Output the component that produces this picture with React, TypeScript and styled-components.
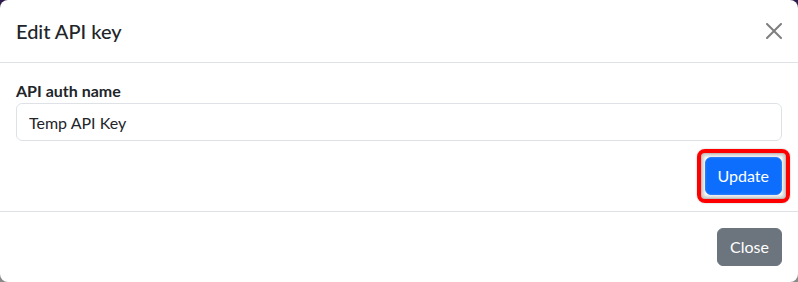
import React from 'react';
import styled, { createGlobalStyle } from 'styled-components';

const GlobalStyle = createGlobalStyle`
  html, body {
    margin: 0;
    padding: 0;
  }
  body {
    width: 798px;
    height: 282px;
    overflow: hidden;
    background: linear-gradient(180deg, #2d1b4e 0%, #5a5a66 60%, #8a8a8a 100%);
    font-family: Lato, "Liberation Sans", sans-serif;
    color: #212529;
  }
`;

// 모달 본체
const ModalContent = styled.div`
  width: 798px;
  height: 282px;
  background: #fff;
  border-radius: 8px;
  overflow: hidden;
  display: flex;
  flex-direction: column;
  box-sizing: border-box;
`;

const ModalHeader = styled.div`
  display: flex;
  align-items: center;
  justify-content: space-between;
  padding: 16px;
  border-bottom: 1px solid #dee2e6;
`;

const ModalTitle = styled.h5`
  margin: 0;
  font-size: 20px;
  font-weight: 500;
  line-height: 1.5;
`;

const CloseX = styled.button`
  width: 16px;
  height: 16px;
  padding: 0;
  border: 0;
  background: transparent;
  opacity: 0.5;
  display: flex;
  cursor: pointer;
`;

const ModalBody = styled.div`
  padding: 16px;
  display: flex;
  flex-direction: column;
`;

const Label = styled.label`
  font-size: 16px;
  font-weight: 700;
  line-height: 24px;
`;

const Input = styled.input`
  height: 38px;
  box-sizing: border-box;
  padding: 6px 12px;
  font-family: inherit;
  font-size: 16px;
  color: #212529;
  border: 1px solid #dee2e6;
  border-radius: 6px;
  outline: none;
`;

const ActionRow = styled.div`
  display: flex;
  justify-content: flex-end;
  margin-top: 16px;
`;

const Highlight = styled.span`
  position: relative;
  display: inline-flex;

  &::after {
    content: '';
    position: absolute;
    inset: -8px;
    border: 4px solid #ff0000;
    border-radius: 8px;
    box-shadow: inset 0 0 0 1px #bdbdbd, inset 0 0 3px 3px #cfcfcf, 0 0 2px rgba(0, 0, 0, 0.25);
    pointer-events: none;
  }
`;

const Button = styled.button<{ $variant: 'primary' | 'secondary' }>`
  height: 38px;
  box-sizing: border-box;
  padding: 6px 12px;
  font-family: inherit;
  font-size: 16px;
  line-height: 24px;
  color: #fff;
  border: 1px solid ${(p) => (p.$variant === 'primary' ? '#0d6efd' : '#6c757d')};
  background: ${(p) => (p.$variant === 'primary' ? '#0d6efd' : '#6c757d')};
  border-radius: 6px;
  cursor: pointer;
`;

const ModalFooter = styled.div`
  display: flex;
  justify-content: flex-end;
  padding: 12px;
  border-top: 1px solid #dee2e6;
`;

const FooterButton = styled(Button)`
  margin: 4px;
`;

const App: React.FC = () => (
  <>
    <GlobalStyle />
    <ModalContent>
      <ModalHeader>
        <ModalTitle>Edit API key</ModalTitle>
        <CloseX aria-label="Close">
          <svg width="16" height="16" viewBox="0 0 16 16">
            <path
              fill="#000"
              d="M.293.293a1 1 0 0 1 1.414 0L8 6.586 14.293.293a1 1 0 1 1 1.414 1.414L9.414 8l6.293 6.293a1 1 0 0 1-1.414 1.414L8 9.414l-6.293 6.293a1 1 0 0 1-1.414-1.414L6.586 8 .293 1.707a1 1 0 0 1 0-1.414z"
            />
          </svg>
        </CloseX>
      </ModalHeader>
      <ModalBody>
        <Label htmlFor="authName">API auth name</Label>
        <Input id="authName" defaultValue="Temp API Key" />
        <ActionRow>
          <Highlight>
            <Button $variant="primary">Update</Button>
          </Highlight>
        </ActionRow>
      </ModalBody>
      <ModalFooter>
        <FooterButton $variant="secondary">Close</FooterButton>
      </ModalFooter>
    </ModalContent>
  </>
);

export default App;
